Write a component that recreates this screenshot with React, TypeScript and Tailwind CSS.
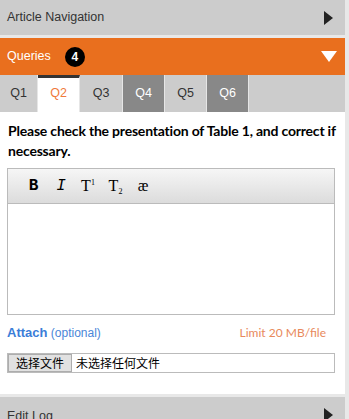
const tabs = [
  { label: 'Q1', w: 'w-[38px]', kind: 'light' },
  { label: 'Q2', w: 'w-[42px]', kind: 'active' },
  { label: 'Q3', w: 'w-[43px]', kind: 'light' },
  { label: 'Q4', w: 'w-[42px]', kind: 'dark' },
  { label: 'Q5', w: 'w-[42px]', kind: 'light' },
  { label: 'Q6', w: 'w-[42px]', kind: 'dark' },
];

function RightArrow() {
  return (
    <svg width="9" height="14" viewBox="0 0 9 14">
      <polygon points="0,0 9,7 0,14" fill="#222" />
    </svg>
  );
}

function DownArrow() {
  return (
    <svg width="16" height="11" viewBox="0 0 16 11">
      <polygon points="0,0 16,0 8,11" fill="#fff" />
    </svg>
  );
}

export default function App() {
  const arial = { fontFamily: '"Liberation Sans", Arial, sans-serif' };
  return (
    <div className="w-[349px] h-[419px] overflow-hidden bg-[#e8e8e8] flex" style={arial}>
      <div className="w-[345px] flex flex-col">
        <div className="h-[35px] shrink-0 bg-[#cccccc] flex items-center justify-between pl-[7px] pr-[12px] text-[12.5px] text-[#333]">
          <span>Article Navigation</span>
          <RightArrow />
        </div>
        <div className="h-[3px] shrink-0" />
        <div className="h-[37px] shrink-0 bg-[#e96f1e] flex items-center pl-[7px] pr-[8px] text-white text-[12.5px]">
          <span>Queries</span>
          <span className="ml-[14px] w-[20px] h-[20px] rounded-full bg-black flex items-center justify-center font-bold text-[12px]">4</span>
          <span className="ml-auto flex"><DownArrow /></span>
        </div>
        <div className="h-[37px] shrink-0 bg-[#cccccc] flex text-[12.5px]">
          {tabs.map((t) => (
            <div
              key={t.label}
              className={
                t.w +
                ' border-r border-[#e6e6e6] flex items-center justify-center ' +
                (t.kind === 'active'
                  ? 'bg-white text-[#f07a3c] border-t-[3px] border-t-[#333] pb-[3px]'
                  : t.kind === 'dark'
                  ? 'bg-[#888888] text-white'
                  : 'bg-[#cccccc] text-[#333]')
              }
            >
              {t.label}
            </div>
          ))}
        </div>
        <div className="bg-white h-[282px] shrink-0 px-[7px] pt-[9px]">
          <p className="font-bold text-[14px] tracking-[-0.2px] leading-[20px] text-black pl-[1px]" style={{ fontFamily: 'Lato, "Open Sans", sans-serif' }}>
            Please check the presentation of Table 1, and correct if necessary.
          </p>
          <div className="mt-[7px] w-[328px] h-[147px] border border-[#bbbbbb] flex flex-col">
            <div className="h-[35px] border-b border-[#bbbbbb] bg-gradient-to-b from-[#f6f6f6] to-[#dcdcdc] flex items-center pl-[11px] text-[16px] text-black">
              <span className="w-[29px] text-center font-bold" style={{ fontFamily: '"Liberation Mono", monospace' }}>B</span>
              <span className="w-[26px] text-center italic" style={{ fontFamily: '"Liberation Mono", monospace' }}>I</span>
              <span className="w-[28px] text-center" style={{ fontFamily: '"Liberation Serif", serif' }}>T<span className="text-[8px] align-[6px]">1</span></span>
              <span className="w-[27px] text-center" style={{ fontFamily: '"Liberation Serif", serif' }}>T<span className="text-[8px] align-[-3px]">2</span></span>
              <span className="w-[28px] text-center" style={{ fontFamily: '"Liberation Serif", serif' }}>æ</span>
            </div>
            <div className="flex-1 bg-white" />
          </div>
          <div className="mt-[10px] flex items-center justify-between w-[328px] pr-[9px] h-[16px]">
            <span className="text-[12px] text-[#4a86d8]">
              <span className="font-bold text-[#3b7dd8] text-[13px]">Attach</span> (optional)
            </span>
            <span className="text-[12px] text-[#e8895c]" style={{ fontFamily: 'Lato, sans-serif' }}>Limit 20 MB/file</span>
          </div>
          <div className="mt-[12px] w-[328px] h-[20px] border border-[#bbbbbb] flex items-center" style={{ fontFamily: '"Noto Sans CJK SC", sans-serif' }}>
            <span className="h-[18px] w-[64px] bg-[#e1e1e1] border border-[#adadad] flex items-center justify-center text-[12px] text-black leading-none">选择文件</span>
            <span className="ml-[4px] text-[12px] text-black leading-none">未选择任何文件</span>
          </div>
        </div>
        <div className="h-[3px] shrink-0" />
        <div className="h-[40px] shrink-0 bg-[#cccccc] flex items-start justify-between pl-[7px] pr-[12px] pt-[10px] text-[12.5px] text-[#333]">
          <span>Edit Log</span>
          <span className="pt-[1px]"><RightArrow /></span>
        </div>
      </div>
    </div>
  );
}
